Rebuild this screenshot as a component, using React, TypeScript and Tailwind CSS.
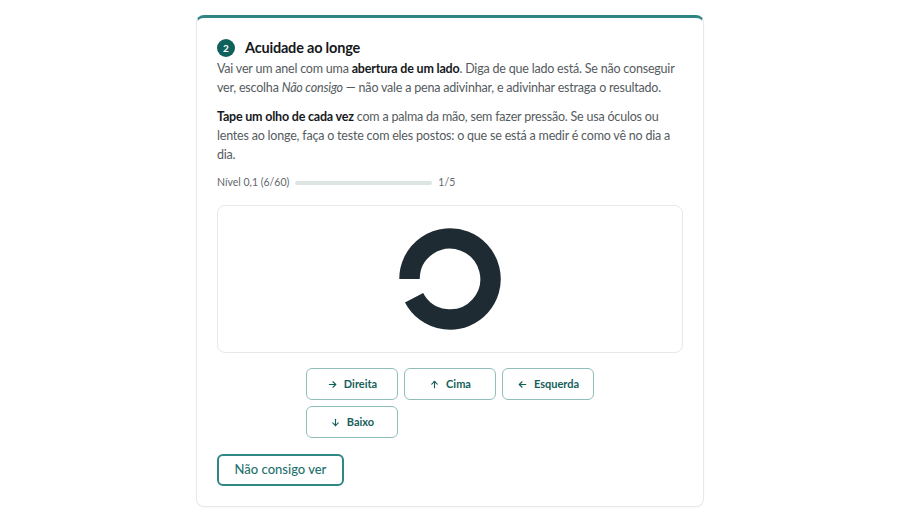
import React from "react";

const font = { fontFamily: "Lato, 'Noto Sans', sans-serif" };

function Arrow({ dir }: { dir: "right" | "up" | "left" | "down" }) {
  const rot = { right: 0, down: 90, left: 180, up: 270 }[dir];
  return (
    <svg width="11" height="11" viewBox="0 0 24 24" fill="none" stroke="currentColor" strokeWidth="2.4" strokeLinecap="round" strokeLinejoin="round" style={{ transform: `rotate(${rot}deg)` }}>
      <path d="M5 12h14" />
      <path d="M13 6l6 6-6 6" />
    </svg>
  );
}

function DirButton({ dir, label }: { dir: "right" | "up" | "left" | "down"; label: string }) {
  return (
    <button className="h-[32px] w-[92px] rounded-[6px] border border-[#8fbfba] bg-white flex items-center justify-center gap-[6px] text-[11px] font-bold text-[#155f5b]">
      <Arrow dir={dir} />
      <span>{label}</span>
    </button>
  );
}

export default function App() {
  return (
    <div className="min-h-[521px] w-full bg-white pt-[15px]" style={font}>
      <div className="mx-auto w-[508px] rounded-[8px] border border-[#e6e8ea] border-t-[3px] border-t-[#2f8581] bg-white px-[20px] pt-[21px] pb-[20px] shadow-[0_1px_2px_rgba(0,0,0,0.03)]">
        <div className="flex items-center gap-[10px] h-[18px]">
          <div className="h-[18px] w-[18px] rounded-full bg-[#10605c] flex items-center justify-center text-[10px] font-bold text-white">2</div>
          <h2 className="text-[14.5px] font-bold tracking-[-0.2px] text-[#16191c]">Acuidade ao longe</h2>
        </div>
        <p className="mt-[2px] text-[12.5px] leading-[19px] tracking-[-0.2px] text-[#555b60]">
          Vai ver um anel com uma <strong className="font-bold text-[#16191c]">abertura de um lado</strong>. Diga de que lado está. Se não conseguir ver, escolha <em>Não consigo</em> — não vale a pena adivinhar, e adivinhar estraga o resultado.
        </p>
        <p className="mt-[10px] text-[12.5px] leading-[19px] tracking-[-0.2px] text-[#555b60]">
          <strong className="font-bold text-[#16191c]">Tape um olho de cada vez</strong> com a palma da mão, sem fazer pressão. Se usa óculos ou lentes ao longe, faça o teste com eles postos: o que se está a medir é como vê no dia a dia.
        </p>
        <div className="mt-[11px] flex items-center gap-[6px] text-[10.5px] text-[#62686d] h-[16px]">
          <span>Nível 0,1 (6/60)</span>
          <div className="h-[4px] w-[137px] rounded-full bg-[#dce5e4]" />
          <span>1/5</span>
        </div>
        <div className="mt-[14px] h-[148px] rounded-[8px] border border-[#e6e8ea] flex items-center justify-center">
          <svg width="102" height="102" viewBox="0 0 102 102">
            <path d="M10.5 51 A40.5 40.5 0 1 1 15.07 69.7" fill="none" stroke="#1e2b33" strokeWidth="20.5" />
          </svg>
        </div>
        <div className="mt-[15px] flex justify-center">
          <div className="grid grid-cols-[92px_92px_92px] gap-[6px]">
            <DirButton dir="right" label="Direita" />
            <DirButton dir="up" label="Cima" />
            <DirButton dir="left" label="Esquerda" />
            <DirButton dir="down" label="Baixo" />
          </div>
        </div>
        <button className="mt-[16px] h-[32px] w-[127px] rounded-[6px] border-2 border-[#2e8784] bg-white text-[13px] font-medium text-[#1f716d]">
          Não consigo ver
        </button>
      </div>
    </div>
  );
}
